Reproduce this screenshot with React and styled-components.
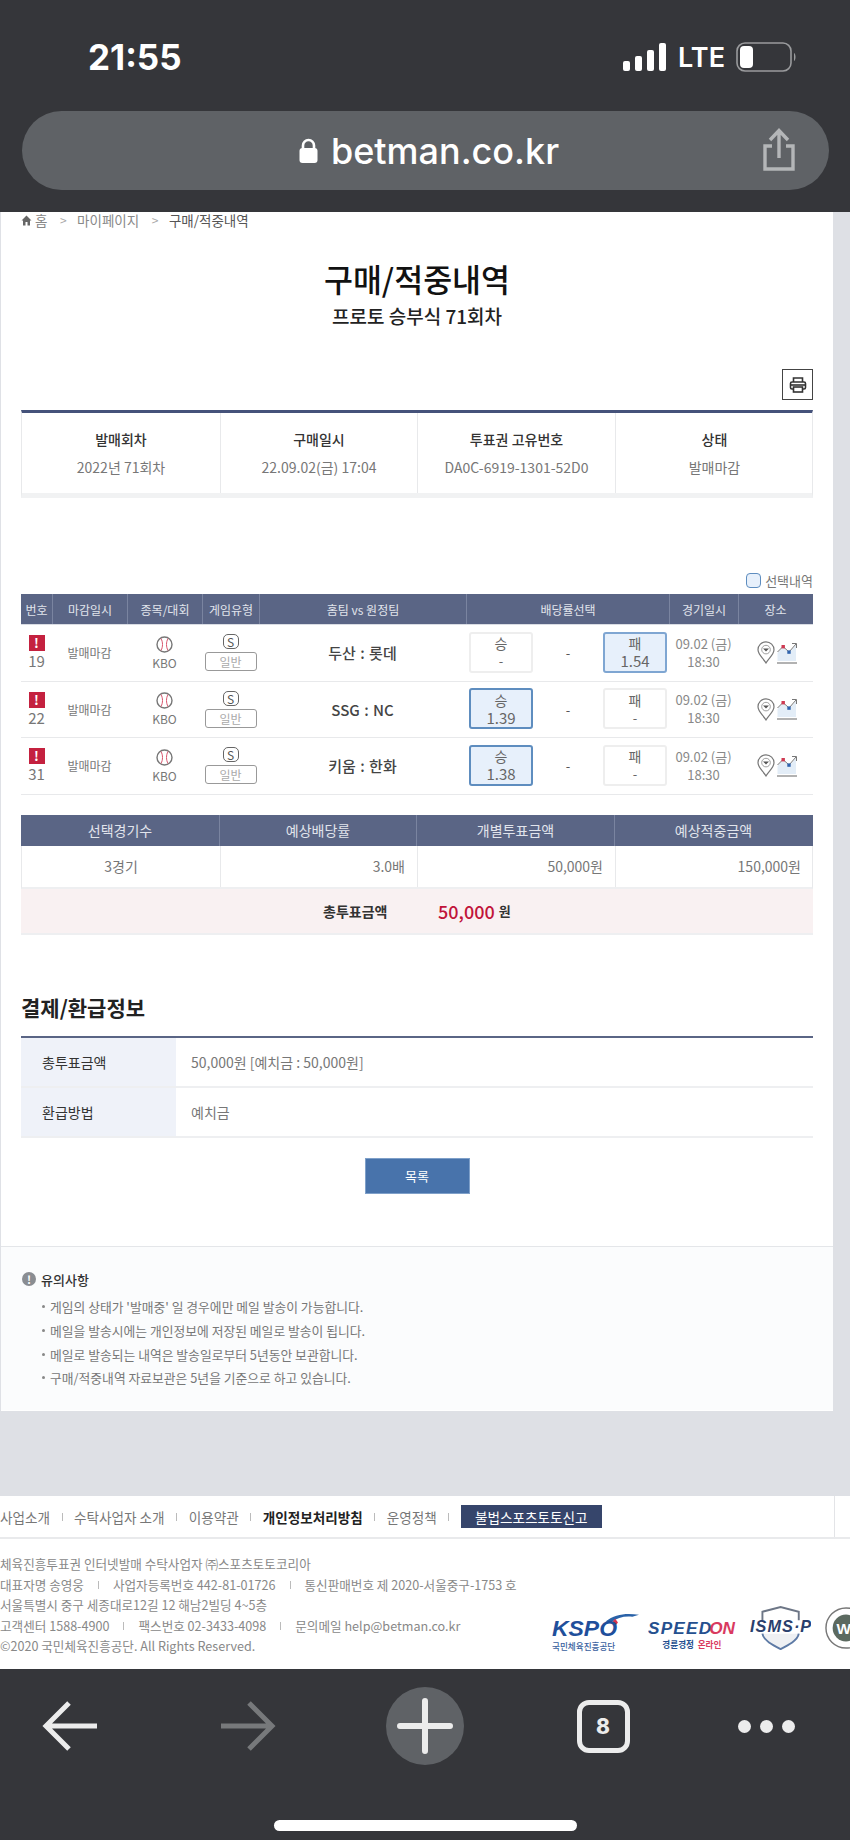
import React from 'react';
import styled, { createGlobalStyle } from 'styled-components';

const Global = createGlobalStyle`
  html, body { margin: 0; padding: 0; background: #dee0e5; }
  body { font-family: "Noto Sans CJK KR", "Noto Sans", sans-serif; }
  * { box-sizing: border-box; }
`;

const Screen = styled.div`
  width: 850px;
  height: 1840px;
  display: flex;
  flex-direction: column;
  overflow: hidden;
  background: #dee0e5;
`;

/* ---------- browser chrome top ---------- */
const TopBar = styled.header`
  height: 212px;
  flex: none;
  background: #35363a;
  padding: 36px 21px 0 22px;
  display: flex;
  flex-direction: column;
`;
const StatusRow = styled.div`
  height: 42px;
  display: flex;
  align-items: center;
  justify-content: space-between;
  padding: 0 32px 0 66px;
  color: #fff;
`;
const Clock = styled.span`
  font-family: "Inter", sans-serif;
  font-size: 35px;
  font-weight: 700;
`;
const StatusIcons = styled.div`
  display: flex;
  align-items: center;
  gap: 11px;
`;
const Lte = styled.span`
  font-family: "Inter", sans-serif;
  font-size: 27px;
  font-weight: 600;
`;
const UrlBar = styled.div`
  margin-top: 33px;
  height: 79px;
  border-radius: 40px;
  background: #5f6266;
  position: relative;
  display: flex;
  align-items: center;
  justify-content: center;
  gap: 13px;
  color: #fff;
  padding-left: 7px;
`;
const UrlText = styled.span`
  font-family: "Inter", sans-serif;
  font-size: 36px;
  font-weight: 500;
`;
const ShareWrap = styled.span`
  position: absolute;
  right: 33px;
  top: 17px;
  display: flex;
`;

/* ---------- page ---------- */
const Panel = styled.main`
  width: 833px;
  height: 1199px;
  flex: none;
  background: #fff;
  border-left: 1px solid #dfe1e6;
`;
const Content = styled.div`
  padding: 0 20px 0 20px;
  height: 1035px;
  border-bottom: 1px solid #e4e6e9;
`;
const Crumbs = styled.nav`
  height: 16px;
  display: flex;
  align-items: center;
  font-size: 13.5px;
  line-height: 14px;
  color: #888;
`;
const CrumbSep = styled.span`
  margin: 0 10.5px 0 12.5px;
  color: #aaa;
  font-size: 12px;
`;
const CrumbNow = styled.span`
  color: #555;
`;
const Title = styled.h1`
  margin: 30px 0 0;
  text-align: center;
  font-size: 31.5px;
  line-height: 40px;
  font-weight: 500;
  color: #111;
`;
const Sub = styled.p`
  margin: 5px 0 0;
  text-align: center;
  font-size: 19px;
  line-height: 26px;
  font-weight: 500;
  color: #222;
`;
const PrintRow = styled.div`
  margin-top: 40px;
  display: flex;
  justify-content: flex-end;
`;
const PrintBtn = styled.div`
  width: 31px;
  height: 31px;
  border: 1px solid #444;
  display: flex;
  align-items: center;
  justify-content: center;
`;
const InfoTable = styled.div`
  margin-top: 10px;
  display: grid;
  grid-template-columns: 198px 197px 198px 198px;
  height: 88px;
  border-top: 3px solid #45527a;
  border-bottom: 5px solid #f1f2f3;
  border-left: 1px solid #e8e9eb;
  border-right: 1px solid #e8e9eb;
`;
const InfoCell = styled.div`
  border-left: ${p => (p.$first ? 'none' : '1px solid #e8e9eb')};
  text-align: center;
  padding-top: 15px;
`;
const InfoLabel = styled.div`
  font-size: 14px;
  line-height: 22px;
  font-weight: 500;
  color: #333;
`;
const InfoValue = styled.div`
  margin-top: 6px;
  font-size: 14px;
  line-height: 22px;
  color: #777;
`;
const SelectRow = styled.div`
  margin-top: 74px;
  height: 16px;
  display: flex;
  justify-content: flex-end;
  align-items: center;
  gap: 4px;
  font-size: 13px;
  color: #777;
`;
const SelectBox = styled.span`
  width: 15px;
  height: 15px;
  border-radius: 4px;
  background: #e7f0fb;
  border: 1px solid #5e8dbf;
`;

const matchCols = '31px 75px 75px 57px 207px 203px 69px 74px';

const MatchHead = styled.div`
  margin-top: 6px;
  height: 31px;
  display: grid;
  grid-template-columns: ${matchCols};
  background: #5a6585;
  color: #e1e4ec;
  font-size: 12px;
  border-bottom: 1px solid #d9dce3;
`;
const HeadCell = styled.div`
  display: flex;
  align-items: center;
  justify-content: center;
  white-space: nowrap;
  border-left: ${p => (p.$first ? 'none' : '1px solid #7a84a0')};
`;
const MatchRow = styled.div`
  height: 56.5px;
  display: grid;
  grid-template-columns: ${matchCols};
  border-bottom: 1px solid #e8e9eb;
  color: #777;
`;
const Cell = styled.div`
  display: flex;
  flex-direction: column;
  align-items: center;
  justify-content: center;
  font-size: 12px;
`;
const Alert = styled.span`
  width: 16px;
  height: 16px;
  background: #c4213f;
  color: #fff;
  font-size: 13px;
  line-height: 16px;
  font-weight: 700;
  text-align: center;
`;
const RowNo = styled.span`
  font-size: 15px;
  line-height: 19px;
  color: #777;
`;
const League = styled.span`
  font-size: 12px;
  line-height: 15px;
  margin-top: 2px;
  color: #777;
`;
const SBadge = styled.span`
  width: 16px;
  height: 15px;
  border: 1px solid #666;
  border-radius: 5px;
  font-size: 12px;
  line-height: 13px;
  text-align: center;
  color: #555;
`;
const TypeBox = styled.span`
  margin-top: 3px;
  width: 52px;
  height: 19px;
  border: 1px solid #999;
  border-radius: 3px;
  font-size: 12px;
  line-height: 17px;
  text-align: center;
  color: #aaa;
`;
const Teams = styled.div`
  display: flex;
  align-items: center;
  justify-content: center;
  font-size: 15px;
  font-weight: 500;
  color: #444;
  white-space: pre;
  word-spacing: 1px;
`;
const OddsCell = styled.div`
  display: grid;
  grid-template-columns: 64px 1fr 64px;
  align-items: center;
  padding: 0 2px 0 3px;
`;
const OddsBox = styled.div`
  height: 41px;
  border-radius: 3px;
  border: ${p => (p.$on ? `2px solid ${p.$soft ? '#7fa6d2' : '#5e8dbf'}` : '2px solid #eeeeee')};
  background: ${p => (p.$on ? '#e7f0fb' : '#fff')};
  display: flex;
  flex-direction: column;
  align-items: center;
  justify-content: center;
  margin-top: -1px;
`;
const OddsName = styled.span`
  font-size: 14px;
  line-height: 17px;
  color: #666;
`;
const OddsValue = styled.span`
  font-size: ${p => (p.$on ? '15px' : '13px')};
  line-height: 17px;
  color: #666;
`;
const Dash = styled.span`
  text-align: center;
  font-size: 13px;
  color: #555;
`;
const DateText = styled.span`
  font-size: 13px;
  line-height: 18px;
  color: #888;
  white-space: nowrap;
`;
const PlaceIcons = styled.div`
  display: flex;
  align-items: center;
  justify-content: center;
  gap: 2px;
  padding-left: 4px;
`;
const SumHead = styled.div`
  margin-top: 20px;
  display: grid;
  grid-template-columns: 198px 197px 198px 198px;
  height: 31px;
  background: #5a6585;
  color: #e1e4ec;
  font-size: 14px;
`;
const SumRow = styled.div`
  display: grid;
  grid-template-columns: 198px 197px 198px 198px;
  height: 43px;
  border-bottom: 2px solid #eeeff1;
  border-left: 1px solid #e8e9eb;
  border-right: 1px solid #e8e9eb;
`;
const SumCell = styled.div`
  display: flex;
  align-items: center;
  justify-content: ${p => (p.$center ? 'center' : 'flex-end')};
  padding-right: 12px;
  padding-left: ${p => (p.$center ? '12px' : '0')};
  font-size: 14px;
  color: #777;
  border-left: ${p => (p.$center ? 'none' : '1px solid #e8e9eb')};
`;
const TotalRow = styled.div`
  height: 46px;
  background: #f9f1f2;
  border-bottom: 2px solid #eeeff1;
  display: flex;
  align-items: center;
  padding-left: 302px;
`;
const TotalLabel = styled.span`
  width: 115px;
  font-size: 14px;
  font-weight: 700;
  color: #333;
`;
const TotalAmount = styled.span`
  font-size: 18px;
  font-weight: 500;
  color: #c1143a;
`;
const TotalUnit = styled.span`
  margin-left: 4px;
  font-size: 13px;
  font-weight: 700;
  color: #333;
`;
const SectionTitle = styled.h2`
  margin: 56px 0 0;
  font-size: 21px;
  line-height: 32px;
  font-weight: 700;
  color: #222;
`;
const PayTable = styled.div`
  margin-top: 13px;
  border-top: 2px solid #5a6585;
`;
const PayRow = styled.div`
  display: grid;
  grid-template-columns: 155px 1fr;
  height: 50px;
  border-bottom: 2px solid #eeeff1;
`;
const PayLabel = styled.div`
  display: flex;
  align-items: center;
  padding-left: 21px;
  background: #eff2f9;
  font-size: 14px;
  color: #333;
`;
const PayValue = styled.div`
  display: flex;
  align-items: center;
  padding-left: 15px;
  font-size: 14px;
  color: #777;
`;
const ButtonRow = styled.div`
  margin-top: 20px;
  display: flex;
  justify-content: center;
`;
const ListBtn = styled.div`
  width: 105px;
  height: 36px;
  background: #4873ab;
  border: 1px solid #7fa0c9;
  color: #fff;
  font-size: 13px;
  display: flex;
  align-items: center;
  justify-content: center;
`;
const Notice = styled.section`
  height: 163px;
  background: #fbfcfd;
  padding: 22px 0 0 21px;
`;
const NoticeHead = styled.div`
  display: flex;
  align-items: center;
  gap: 5px;
  height: 20px;
  font-size: 13px;
  font-weight: 500;
  color: #333;
`;
const NoticeIcon = styled.span`
  width: 14px;
  height: 14px;
  border-radius: 50%;
  background: #8a8d92;
  color: #fff;
  font-size: 11px;
  line-height: 14px;
  font-weight: 700;
  text-align: center;
`;
const NoticeList = styled.ul`
  list-style: none;
  margin: 6px 0 0;
  padding: 0 0 0 20px;
`;
const NoticeItem = styled.li`
  height: 23.7px;
  display: flex;
  align-items: center;
  gap: 5px;
  font-size: 12.8px;
  color: #777;
  &::before {
    content: '';
    width: 3px;
    height: 3px;
    border-radius: 50%;
    background: #888;
  }
`;

/* ---------- footer ---------- */
const Footer = styled.footer`
  margin-top: 85px;
  height: 173px;
  flex: none;
  background: #fff;
`;
const FootNav = styled.nav`
  width: 835px;
  height: 41px;
  border-right: 1px solid #e3e4e7;
  display: flex;
  align-items: center;
  font-size: 13.6px;
  color: #777;
`;
const FootFrame = styled.div`
  border-bottom: 2px solid #e9eaec;
`;
const NavSep = styled.span`
  width: 1px;
  height: 8px;
  margin: 0 11.5px;
  background: #bbb;
`;
const NavStrong = styled.span`
  font-weight: 700;
  color: #222;
`;
const ReportBtn = styled.span`
  width: 141px;
  height: 23px;
  background: #36456b;
  color: #fff;
  display: flex;
  align-items: center;
  justify-content: center;
  font-size: 13.6px;
`;
const FootBody = styled.div`
  display: flex;
  justify-content: space-between;
  height: 130px;
`;
const FootText = styled.div`
  padding-top: 15px;
  font-size: 12.6px;
  line-height: 20.5px;
  color: #888;
`;
const FootLine = styled.div`
  display: flex;
  align-items: center;
  white-space: pre;
`;
const FootSep = styled.span`
  width: 1px;
  height: 8px;
  margin: 0 14px;
  background: #bbb;
`;
const Logos = styled.div`
  width: 298px;
  flex: none;
  overflow: hidden;
  padding-top: 72px;
  display: flex;
  align-items: flex-start;
`;

/* ---------- browser chrome bottom ---------- */
const BottomBar = styled.div`
  flex: 1;
  background: #35363a;
  display: flex;
  flex-direction: column;
  align-items: center;
`;
const ToolRow = styled.div`
  width: 100%;
  height: 96px;
  margin-top: 9px;
  display: grid;
  grid-template-columns: 140px 216px 138px 218px 1fr;
  align-items: center;
`;
const ToolSlot = styled.div`
  display: flex;
  justify-content: center;
`;
const PlusCircle = styled.div`
  width: 78px;
  height: 78px;
  border-radius: 50%;
  background: #5f6266;
  display: flex;
  align-items: center;
  justify-content: center;
`;
const TabBox = styled.div`
  width: 53px;
  height: 53px;
  border: 5px solid #ececec;
  border-radius: 12px;
  color: #ececec;
  font-family: "Inter", sans-serif;
  font-size: 21px;
  font-weight: 800;
  display: flex;
  align-items: center;
  justify-content: center;
`;
const Dots = styled.div`
  display: flex;
  gap: 9px;
  padding-right: 30px;
`;
const Dot = styled.span`
  width: 13px;
  height: 13px;
  border-radius: 50%;
  background: #ececec;
`;
const HomeBar = styled.div`
  margin-top: 46px;
  width: 303px;
  height: 11px;
  border-radius: 6px;
  background: #fff;
`;

/* ---------- drawings ---------- */
const Signal = () => (
  <svg width="44" height="28" viewBox="0 0 44 28" fill="#fff">
    <rect x="0" y="18" width="7" height="10" rx="2" />
    <rect x="12" y="13" width="7" height="15" rx="2" />
    <rect x="24" y="7" width="7" height="21" rx="2" />
    <rect x="36" y="0" width="7" height="28" rx="2" />
  </svg>
);
const Battery = () => (
  <svg width="61" height="30" viewBox="0 0 61 30" fill="none">
    <rect x="1" y="1" width="54" height="28" rx="8" stroke="#9a9b9d" strokeWidth="1.6" />
    <rect x="4" y="4" width="13" height="22" rx="4" fill="#fff" />
    <path d="M58 11 C60 12 60 18 58 19 Z" fill="#9a9b9d" />
  </svg>
);
const Lock = () => (
  <svg width="19" height="26" viewBox="0 0 19 26" fill="#fff">
    <path d="M4 11 V7.5 a5.5 5.5 0 0 1 11 0 V11" fill="none" stroke="#fff" strokeWidth="2.6" />
    <rect x="0.5" y="10" width="18" height="15" rx="3" />
  </svg>
);
const Share = () => (
  <svg width="34" height="44" viewBox="0 0 34 44" fill="none" stroke="#b4b6b8" strokeWidth="3.4">
    <path d="M17 30 V3 M8 12 L17 2.5 L26 12" />
    <path d="M10 18 H3 V41 H31 V18 H24" />
  </svg>
);
const Home = () => (
  <svg width="11" height="11" viewBox="0 0 11 11" fill="#666" style={{ marginRight: 3 }}>
    <path d="M5.5 0.5 L10.5 5.5 H9 V10.5 H6.5 V7 H4.5 V10.5 H2 V5.5 H0.5 Z" />
  </svg>
);
const Printer = () => (
  <svg width="18" height="18" viewBox="0 0 18 18" fill="none" stroke="#333" strokeWidth="1.6">
    <path d="M4.5 6 V2 H13.5 V6" />
    <rect x="1.5" y="6" width="15" height="7" rx="1.5" />
    <rect x="4.5" y="11" width="9" height="5" fill="#fff" />
    <path d="M1.5 9 H16.5" />
  </svg>
);
const Ball = () => (
  <svg width="17" height="17" viewBox="0 0 17 17" fill="none">
    <circle cx="8.5" cy="8.5" r="7.5" stroke="#777" strokeWidth="1.4" />
    <path d="M5 2.5 C7 6 7 11 5 14.5 M12 2.5 C10 6 10 11 12 14.5" stroke="#d9546c" strokeWidth="1" />
  </svg>
);
const Pin = () => (
  <svg width="18" height="23" viewBox="0 0 18 23" fill="none">
    <path d="M9 22 C6 17 1 13.5 1 8.8 a8 8 0 0 1 16 0 C17 13.5 12 17 9 22 Z" stroke="#777" strokeWidth="1.2" />
    <circle cx="9" cy="8.6" r="4.3" stroke="#888" strokeWidth="0.8" />
    <path d="M6 7.4 H12 L9 10.6 Z" fill="#555" />
  </svg>
);
const Trend = () => (
  <svg width="20" height="22" viewBox="0 0 20 22" fill="none">
    <path d="M0.5 11 L6 5 L12 11 L19 3 V19 H0.5 Z" fill="#e3edf7" />
    <path d="M0.5 10 L6 4.5 L12 10 L19 2 M15 1.5 H19.5 V6" stroke="#777" strokeWidth="1" />
    <rect x="4.5" y="3" width="3.4" height="3.4" fill="#cf3a52" />
    <rect x="10.3" y="8.4" width="3.4" height="3.4" fill="#2f63ad" />
    <path d="M0 21 H20" stroke="#888" strokeWidth="1.3" />
  </svg>
);
const KspoLogo = () => (
  <svg width="91" height="42" viewBox="0 0 91 42">
    <path d="M56 10 C66 2 78 1 91 3 L84 5 C76 4 68 6 62 11 Z" fill="#2a62a8" />
    <path d="M66 7 L69 11 L66 15 L63 11 Z" fill="#d8344f" />
    <text x="0" y="25" fontFamily="Liberation Sans, sans-serif" fontSize="23" fontWeight="700" fontStyle="italic" fill="#1f4f9b" textLength="68" lengthAdjust="spacingAndGlyphs">KSPO</text>
    <text x="0" y="40" fontFamily="Noto Sans CJK KR, sans-serif" fontSize="9" fontWeight="500" fill="#3a5f9e">국민체육진흥공단</text>
  </svg>
);
const SpeedonLogo = () => (
  <svg width="92" height="40" viewBox="0 0 92 40" style={{ marginLeft: 9, marginTop: 1 }}>
    <text x="0" y="22" fontFamily="Liberation Sans, sans-serif" fontSize="18" fontWeight="700" fontStyle="italic" fill="#25508f" textLength="66">SPEED</text>
    <text x="64" y="22" fontFamily="Liberation Sans, sans-serif" fontSize="18" fontWeight="700" fontStyle="italic" fill="#d93a60" textLength="27">ON</text>
    <text x="15" y="37" fontFamily="Noto Sans CJK KR, sans-serif" fontSize="9" fontWeight="700" fill="#25508f">경륜경정</text>
    <text x="52" y="37" fontFamily="Noto Sans CJK KR, sans-serif" fontSize="9" fontWeight="700" fill="#d93a60">온라인</text>
  </svg>
);
const IsmsLogo = () => (
  <svg width="64" height="46" viewBox="0 0 64 46" style={{ marginLeft: 14, marginTop: -6 }}>
    <path d="M13 15 V6 L32 1 L51 6 V15" fill="none" stroke="#6d7686" strokeWidth="2" />
    <path d="M13 29 C14 36 24 41 32 45 C40 41 50 36 51 29" fill="#eef0f3" stroke="#5d7aa5" strokeWidth="2" />
    <text x="0" y="27" fontFamily="Liberation Sans, sans-serif" fontSize="17" fontWeight="700" fontStyle="italic" fill="#2a3f6d" textLength="64">ISMS·P</text>
  </svg>
);
const WebLogo = () => (
  <svg width="26" height="44" viewBox="0 0 26 44" style={{ marginLeft: 14, marginTop: -5 }}>
    <circle cx="22" cy="22" r="21" fill="#fff" stroke="#777" strokeWidth="1.5" />
    <circle cx="22" cy="22" r="14" fill="#5c6a60" />
    <text x="12" y="28" fontFamily="Liberation Sans, sans-serif" fontSize="16" fontWeight="700" fill="#fff">W</text>
  </svg>
);
const ArrowLeft = ({ color }) => (
  <svg width="56" height="50" viewBox="0 0 56 50" fill="none" stroke={color} strokeWidth="5">
    <path d="M27 2 L4 25 L27 48 M4 25 H55" />
  </svg>
);
const ArrowRight = ({ color }) => (
  <svg width="56" height="50" viewBox="0 0 56 50" fill="none" stroke={color} strokeWidth="5">
    <path d="M29 2 L52 25 L29 48 M52 25 H1" />
  </svg>
);
const Plus = () => (
  <svg width="56" height="56" viewBox="0 0 56 56" fill="none" stroke="#ececec" strokeWidth="6" strokeLinecap="round">
    <path d="M28 3 V53 M3 28 H53" />
  </svg>
);

const infoRows = [
  ['발매회차', '2022년 71회차'],
  ['구매일시', '22.09.02(금) 17:04'],
  ['투표권 고유번호', 'DA0C-6919-1301-52D0'],
  ['상태', '발매마감'],
];
const heads = ['번호', '마감일시', '종목/대회', '게임유형', '홈팀 vs 원정팀', '배당률선택', '경기일시', '장소'];
const games = [
  { no: 19, teams: '두산 : 롯데', win: '-', lose: '1.54', soft: true },
  { no: 22, teams: 'SSG : NC', win: '1.39', lose: '-' },
  { no: 31, teams: '키움 : 한화', win: '1.38', lose: '-' },
];
const notices = [
  "게임의 상태가 '발매중' 일 경우에만 메일 발송이 가능합니다.",
  '메일을 발송시에는 개인정보에 저장된 메일로 발송이 됩니다.',
  '메일로 발송되는 내역은 발송일로부터 5년동안 보관합니다.',
  '구매/적중내역 자료보관은 5년을 기준으로 하고 있습니다.',
];

const Odds = ({ name, value, soft }) => {
  const on = value !== '-';
  return (
    <OddsBox $on={on} $soft={soft}>
      <OddsName>{name}</OddsName>
      <OddsValue $on={on}>{value}</OddsValue>
    </OddsBox>
  );
};

export default function App() {
  return (
    <Screen>
      <Global />
      <TopBar>
        <StatusRow>
          <Clock>21:55</Clock>
          <StatusIcons>
            <Signal />
            <Lte>LTE</Lte>
            <Battery />
          </StatusIcons>
        </StatusRow>
        <UrlBar>
          <Lock />
          <UrlText>betman.co.kr</UrlText>
          <ShareWrap><Share /></ShareWrap>
        </UrlBar>
      </TopBar>

      <Panel>
        <Content>
          <Crumbs>
            <Home />홈<CrumbSep>&gt;</CrumbSep>마이페이지<CrumbSep>&gt;</CrumbSep><CrumbNow>구매/적중내역</CrumbNow>
          </Crumbs>
          <Title>구매/적중내역</Title>
          <Sub>프로토 승부식 71회차</Sub>
          <PrintRow><PrintBtn><Printer /></PrintBtn></PrintRow>
          <InfoTable>
            {infoRows.map(([label, value], i) => (
              <InfoCell key={label} $first={i === 0}>
                <InfoLabel>{label}</InfoLabel>
                <InfoValue>{value}</InfoValue>
              </InfoCell>
            ))}
          </InfoTable>
          <SelectRow><SelectBox />선택내역</SelectRow>
          <MatchHead>
            {heads.map((h, i) => <HeadCell key={h} $first={i === 0}>{h}</HeadCell>)}
          </MatchHead>
          {games.map(g => (
            <MatchRow key={g.no}>
              <Cell><Alert>!</Alert><RowNo>{g.no}</RowNo></Cell>
              <Cell>발매마감</Cell>
              <Cell><Ball /><League>KBO</League></Cell>
              <Cell><SBadge>S</SBadge><TypeBox>일반</TypeBox></Cell>
              <Teams>{g.teams}</Teams>
              <OddsCell>
                <Odds name="승" value={g.win} />
                <Dash>-</Dash>
                <Odds name="패" value={g.lose} soft={g.soft} />
              </OddsCell>
              <Cell><DateText>09.02 (금)</DateText><DateText>18:30</DateText></Cell>
              <PlaceIcons><Pin /><Trend /></PlaceIcons>
            </MatchRow>
          ))}
          <SumHead>
            {['선택경기수', '예상배당률', '개별투표금액', '예상적중금액'].map((h, i) => (
              <HeadCell key={h} $first={i === 0}>{h}</HeadCell>
            ))}
          </SumHead>
          <SumRow>
            <SumCell $center>3경기</SumCell>
            <SumCell>3.0배</SumCell>
            <SumCell>50,000원</SumCell>
            <SumCell>150,000원</SumCell>
          </SumRow>
          <TotalRow>
            <TotalLabel>총투표금액</TotalLabel>
            <TotalAmount>50,000</TotalAmount>
            <TotalUnit>원</TotalUnit>
          </TotalRow>
          <SectionTitle>결제/환급정보</SectionTitle>
          <PayTable>
            <PayRow><PayLabel>총투표금액</PayLabel><PayValue>50,000원 [예치금 : 50,000원]</PayValue></PayRow>
            <PayRow><PayLabel>환급방법</PayLabel><PayValue>예치금</PayValue></PayRow>
          </PayTable>
          <ButtonRow><ListBtn>목록</ListBtn></ButtonRow>
        </Content>
        <Notice>
          <NoticeHead><NoticeIcon>!</NoticeIcon>유의사항</NoticeHead>
          <NoticeList>
            {notices.map(n => <NoticeItem key={n}>{n}</NoticeItem>)}
          </NoticeList>
        </Notice>
      </Panel>

      <Footer>
        <FootFrame>
          <FootNav>
            사업소개<NavSep />수탁사업자 소개<NavSep />이용약관<NavSep /><NavStrong>개인정보처리방침</NavStrong><NavSep />운영정책<NavSep /><ReportBtn>불법스포츠토토신고</ReportBtn>
          </FootNav>
        </FootFrame>
        <FootBody>
          <FootText>
            <FootLine>체육진흥투표권 인터넷발매 수탁사업자 ㈜스포츠토토코리아</FootLine>
            <FootLine>대표자명 송영웅<FootSep />사업자등록번호 442-81-01726<FootSep />통신판매번호 제 2020-서울중구-1753 호</FootLine>
            <FootLine>서울특별시 중구 세종대로12길 12 해남2빌딩 4~5층</FootLine>
            <FootLine>고객센터 1588-4900<FootSep />팩스번호 02-3433-4098<FootSep />문의메일 help@betman.co.kr</FootLine>
            <FootLine>©2020 국민체육진흥공단. All Rights Reserved.</FootLine>
          </FootText>
          <Logos>
            <KspoLogo />
            <SpeedonLogo />
            <IsmsLogo />
            <WebLogo />
          </Logos>
        </FootBody>
      </Footer>

      <BottomBar>
        <ToolRow>
          <ToolSlot><ArrowLeft color="#ececec" /></ToolSlot>
          <ToolSlot><ArrowRight color="#77797b" /></ToolSlot>
          <ToolSlot><PlusCircle><Plus /></PlusCircle></ToolSlot>
          <ToolSlot><TabBox>8</TabBox></ToolSlot>
          <ToolSlot><Dots><Dot /><Dot /><Dot /></Dots></ToolSlot>
        </ToolRow>
        <HomeBar />
      </BottomBar>
    </Screen>
  );
}
